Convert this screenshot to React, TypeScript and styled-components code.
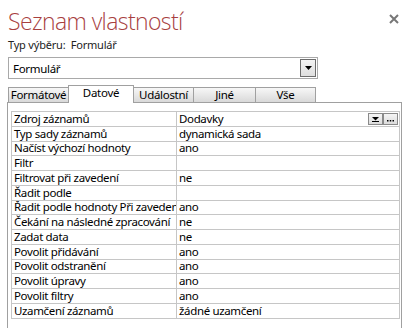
import React from "react";
import styled, { createGlobalStyle } from "styled-components";

const Global = createGlobalStyle`
  html, body { margin: 0; padding: 0; background: #ffffff; }
  body { font-family: "Noto Sans", "Open Sans", sans-serif; color: #000; overflow: hidden; }
`;

const Page = styled.div`
  width: 412px;
  height: 328px;
  padding: 0 0 0 8px;
  box-sizing: border-box;
  display: flex;
  flex-direction: column;
`;

const TitleRow = styled.div`
  display: flex;
  justify-content: space-between;
  align-items: flex-start;
  height: 38px;
  padding-right: 13px;
`;

const Title = styled.h1`
  margin: 6px 0 0 0;
  font-family: "Open Sans", "Noto Sans", sans-serif;
  font-weight: 300;
  font-size: 23px;
  line-height: 30px;
  color: #a83f3f;
  letter-spacing: -0.6px;
`;

const Close = styled.svg`
  margin-top: 14px;
  width: 10px;
  height: 10px;
`;

const Subtitle = styled.div`
  font-size: 11px;
  line-height: 14px;
  color: #222;
  height: 19px;
  white-space: pre;
  letter-spacing: -0.2px;
`;

const Select = styled.div`
  width: 310px;
  height: 22px;
  box-sizing: border-box;
  border: 1px solid #a9a9a9;
  display: flex;
  align-items: center;
  justify-content: space-between;
  padding: 0 1px 0 4px;
  font-size: 11.5px;
  letter-spacing: -0.3px;
`;

const SelectButton = styled.div`
  width: 16px;
  height: 18px;
  box-sizing: border-box;
  border: 1px solid #6d6d6d;
  background: linear-gradient(#f4f4f4, #dedede);
  display: flex;
  align-items: center;
  justify-content: center;
`;

const Tabs = styled.div`
  display: flex;
  align-items: flex-end;
  margin-top: 6px;
  height: 18px;
  padding-left: 1px;
`;

const Tab = styled.div<{ $active?: boolean; $w: number }>`
  width: ${(p) => p.$w}px;
  height: ${(p) => (p.$active ? 18 : 16)}px;
  box-sizing: border-box;
  border: 1px solid #a0a0a0;
  border-bottom: ${(p) => (p.$active ? "none" : "1px solid #a0a0a0")};
  background: ${(p) => (p.$active ? "#fff" : "linear-gradient(#f7f7f7, #d9d9d9)")};
  font-size: 11.5px;
  letter-spacing: -0.3px;
  display: flex;
  justify-content: center;
  align-items: ${(p) => (p.$active ? "flex-start" : "center")};
  line-height: 14px;
  margin-left: -1px;
  position: relative;
  z-index: ${(p) => (p.$active ? 1 : 0)};
`;

const Panel = styled.div`
  margin-left: -1px;
  width: 395px;
  flex: 1;
  box-sizing: border-box;
  border: 1px solid #a0a0a0;
  border-bottom: none;
  margin-top: -1px;
  padding: 8px 1px 0 3px;
`;

const Grid = styled.div`
  display: grid;
  grid-template-columns: 165px 223px;
  border-top: 1px solid #c6c6c6;
  border-left: 1px solid #c6c6c6;
`;

const Cell = styled.div`
  height: 13.75px;
  border-right: 1px solid #c6c6c6;
  border-bottom: 1px solid #c6c6c6;
  font-size: 11.5px;
  letter-spacing: -0.35px;
  line-height: 14px;
  padding-left: 2px;
  white-space: nowrap;
  overflow: hidden;
  display: flex;
  align-items: center;
`;

const ValueCell = styled(Cell)`
  justify-content: space-between;
  padding-right: 1px;
`;

const MiniButtons = styled.div`
  display: flex;
`;

const MiniButton = styled.div`
  width: 15px;
  height: 12px;
  box-sizing: border-box;
  border: 1px solid #8a8a8a;
  background: linear-gradient(#f5f5f5, #dcdcdc);
  display: flex;
  align-items: flex-end;
  justify-content: center;
  padding-bottom: 2px;
`;

const rows: [string, string][] = [
  ["Zdroj záznamů", "Dodavky"],
  ["Typ sady záznamů", "dynamická sada"],
  ["Načíst výchozí hodnoty", "ano"],
  ["Filtr", ""],
  ["Filtrovat při zavedení", "ne"],
  ["Řadit podle", ""],
  ["Řadit podle hodnoty Při zavedení", "ano"],
  ["Čekání na následné zpracování", "ne"],
  ["Zadat data", "ne"],
  ["Povolit přidávání", "ano"],
  ["Povolit odstranění", "ano"],
  ["Povolit úpravy", "ano"],
  ["Povolit filtry", "ano"],
  ["Uzamčení záznamů", "žádné uzamčení"],
];

const tabs: { label: string; w: number; active?: boolean }[] = [
  { label: "Formátové", w: 61 },
  { label: "Datové", w: 66, active: true },
  { label: "Událostní", w: 61 },
  { label: "Jiné", w: 63 },
  { label: "Vše", w: 61 },
];

export default function App() {
  return (
    <>
      <Global />
      <Page>
        <TitleRow>
          <Title>Seznam vlastností</Title>
          <Close viewBox="0 0 10 10">
            <path d="M1 1 L9 9 M9 1 L1 9" stroke="#777" strokeWidth="2" />
          </Close>
        </TitleRow>
        <Subtitle>{"Typ výběru:  Formulář"}</Subtitle>
        <Select>
          <span>Formulář</span>
          <SelectButton>
            <svg width="7" height="4" viewBox="0 0 7 4">
              <path d="M0 0 H7 L3.5 4 Z" fill="#000" />
            </svg>
          </SelectButton>
        </Select>
        <Tabs>
          {tabs.map((t) => (
            <Tab key={t.label} $active={t.active} $w={t.w}>
              {t.label}
            </Tab>
          ))}
        </Tabs>
        <Panel>
          <Grid>
            {rows.map(([k, v], i) => (
              <React.Fragment key={k}>
                <Cell>{k}</Cell>
                {i === 0 ? (
                  <ValueCell>
                    <span>{v}</span>
                    <MiniButtons>
                      <MiniButton>
                        <svg width="7" height="5" viewBox="0 0 7 5">
                          <path d="M0 0 H7 L3.5 3.5 Z" fill="#000" />
                          <rect x="0" y="4" width="7" height="1" fill="#000" />
                        </svg>
                      </MiniButton>
                      <MiniButton>
                        <svg width="7" height="2" viewBox="0 0 7 2">
                          <rect x="0" y="0" width="1.5" height="1.5" fill="#000" />
                          <rect x="2.75" y="0" width="1.5" height="1.5" fill="#000" />
                          <rect x="5.5" y="0" width="1.5" height="1.5" fill="#000" />
                        </svg>
                      </MiniButton>
                    </MiniButtons>
                  </ValueCell>
                ) : (
                  <Cell>{v}</Cell>
                )}
              </React.Fragment>
            ))}
          </Grid>
        </Panel>
      </Page>
    </>
  );
}
